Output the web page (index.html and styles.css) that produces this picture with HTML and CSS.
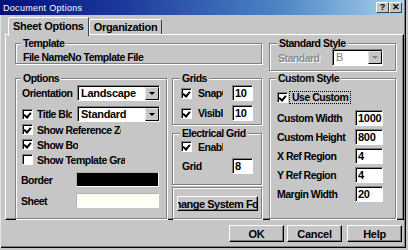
FILE: index.html
```html
<!DOCTYPE html>
<html lang="en">
<head>
  <meta charset="UTF-8">
  <title>Document Options</title>
  <link rel="stylesheet" href="styles.css">
</head>
<body>
  <div class="window">
    <div class="titlebar">
      <span class="title">Document Options</span>
      <div class="tb-buttons">
        <span class="tb-btn">?</span>
        <span class="tb-btn">&#x2715;</span>
      </div>
    </div>

    <div class="tabs">
      <div class="tab active">Sheet Options</div>
      <div class="tab">Organization</div>
    </div>

    <div class="panel">
      <fieldset class="group template">
        <legend>Template</legend>
        <div class="file-name">File NameNo Template File</div>
      </fieldset>

      <fieldset class="group standard">
        <legend>Standard Style</legend>
        <div class="std-row">
          <span class="disabled-text">Standard</span>
          <div class="combo combo-std disabled">
            <span class="combo-text">B</span>
            <span class="combo-btn"><span class="arrow"></span></span>
          </div>
        </div>
      </fieldset>

      <fieldset class="group options">
        <legend>Options</legend>
        <div class="opt-row first">
          <span class="opt-label">Orientation</span>
          <div class="combo combo-opt">
            <span class="combo-text">Landscape</span>
            <span class="combo-btn"><span class="arrow"></span></span>
          </div>
        </div>
        <div class="opt-row second">
          <span class="check checked"></span>
          <span class="check-text clip-title">Title Block</span>
          <div class="combo combo-opt">
            <span class="combo-text">Standard</span>
            <span class="combo-btn"><span class="arrow"></span></span>
          </div>
        </div>
        <div class="chk-row">
          <span class="check checked"></span>
          <span class="check-text clip-ref">Show Reference Zones</span>
        </div>
        <div class="chk-row">
          <span class="check checked"></span>
          <span class="check-text clip-border">Show Border</span>
        </div>
        <div class="chk-row">
          <span class="check"></span>
          <span class="check-text clip-tmpl">Show Template Graphics</span>
        </div>
        <div class="color-row border-row">
          <span class="color-label">Border</span>
          <span class="swatch swatch-black"></span>
        </div>
        <div class="color-row sheet-row">
          <span class="color-label">Sheet</span>
          <span class="swatch swatch-cream"></span>
        </div>
      </fieldset>

      <div class="mid">
        <fieldset class="group grids">
          <legend>Grids</legend>
          <div class="grid-row first">
            <span class="check checked"></span>
            <span class="check-text clip-grid">SnapOn</span>
            <span class="field field-small">10</span>
          </div>
          <div class="grid-row visib">
            <span class="check checked"></span>
            <span class="check-text clip-grid">Visible</span>
            <span class="field field-small">10</span>
          </div>
        </fieldset>

        <fieldset class="group electrical">
          <legend>Electrical Grid</legend>
          <div class="chk-row">
            <span class="check checked"></span>
            <span class="check-text clip-grid">Enable</span>
          </div>
          <div class="grid-row elec-grid">
            <span class="grid-label">Grid</span>
            <span class="field field-small">8</span>
          </div>
        </fieldset>

        <fieldset class="group font-group">
          <button class="win-btn font-btn"><span>Change System Font</span></button>
        </fieldset>
      </div>

      <fieldset class="group custom">
        <legend>Custom Style</legend>
        <div class="use-row">
          <span class="check checked"></span>
          <span class="focus-text">Use Custom</span>
        </div>
        <div class="cust-row">
          <span class="cust-label">Custom Width</span>
          <span class="field field-cust">1000</span>
        </div>
        <div class="cust-row">
          <span class="cust-label">Custom Height</span>
          <span class="field field-cust">800</span>
        </div>
        <div class="cust-row">
          <span class="cust-label">X Ref Region</span>
          <span class="field field-cust">4</span>
        </div>
        <div class="cust-row">
          <span class="cust-label">Y Ref Region</span>
          <span class="field field-cust">4</span>
        </div>
        <div class="cust-row">
          <span class="cust-label">Margin Width</span>
          <span class="field field-cust">20</span>
        </div>
      </fieldset>
    </div>

    <div class="actions">
      <button class="win-btn action-btn">OK</button>
      <button class="win-btn action-btn">Cancel</button>
      <button class="win-btn action-btn help">Help</button>
    </div>
  </div>
</body>
</html>
```

FILE: styles.css
```css
body, html {
  margin: 0;
  padding: 0;
  background: #c6c6c6;
  font-family: 'Liberation Sans', Arial, sans-serif;
  font-size: 10.5px;
  font-weight: bold;
  letter-spacing: -0.5px;
  color: #000;
  overflow: hidden;
}

.window {
  width: 406px;
  height: 248px;
  background: #c6c6c6;
  box-shadow: inset 1px 0 0 #e4e4e4, inset -1px -1px 0 #000, inset -2px -2px 0 #808080;
  display: flex;
  flex-direction: column;
}

/* title bar */
.titlebar {
  height: 15px;
  margin-right: 2px;
  display: flex;
  align-items: center;
  justify-content: space-between;
  background: linear-gradient(to right, #00107a, #1a3a9e 30%, #4f86c6 70%, #a8d4ee);
}

.title {
  color: #fff;
  font-size: 9px;
  font-weight: normal;
  letter-spacing: 0.3px;
  padding-left: 3px;
}

.tb-buttons {
  display: flex;
  padding-right: 2px;
}

.tb-btn {
  width: 11px;
  height: 9px;
  line-height: 9px;
  font-size: 9px;
  letter-spacing: 0;
  text-align: center;
  background: #c6c6c6;
  border: 1px solid;
  border-color: #fff #404040 #404040 #fff;
}

/* tabs */
.tabs {
  display: flex;
  align-items: flex-end;
  margin-top: 2px;
  padding-left: 8px;
  height: 17px;
  position: relative;
  z-index: 2;
}

.tab {
  height: 14px;
  line-height: 14px;
  padding: 0 4px;
  font-size: 11px;
  letter-spacing: -0.3px;
  border: 1px solid;
  border-bottom: none;
  border-color: #fff #404040 transparent #fff;
  border-radius: 2px 2px 0 0;
}

.tab.active {
  height: 18px;
  line-height: 16px;
  margin-bottom: -2px;
  background: #c6c6c6;
}

/* tab page */
.panel {
  margin: 0 2px 0 5px;
  height: 186px;
  box-sizing: border-box;
  border: 1px solid;
  border-color: #fff #000 #000 #fff;
  box-shadow: inset -1px -1px 0 #808080;
  padding: 2px 0 0 9px;
  display: grid;
  grid-template-columns: 152px 5px 90px 7px 127px;
  grid-template-rows: auto 1fr;
  row-gap: 1px;
}

.group {
  margin: 0;
  padding: 0 6px;
  min-width: 0;
  border: 1px solid #808080;
  box-shadow: 1px 1px 0 #fff, inset 1px 1px 0 #fff;
}

.group legend {
  padding: 0 2px;
  margin-left: -1px;
  line-height: 12px;
  white-space: nowrap;
  background: #c6c6c6;
}

.template {
  grid-column: 1 / 4;
  align-self: start;
}

.file-name {
  padding: 2px 0 0 1px;
  line-height: 12px;
  white-space: nowrap;
}

.standard {
  grid-column: 5;
  align-self: start;
  padding: 0 12px 4px 8px;
}

.std-row {
  display: flex;
  align-items: center;
  justify-content: space-between;
}

.disabled-text {
  color: #8a8a8a;
  text-shadow: 1px 1px 0 #fff;
}

/* combo boxes */
.combo {
  height: 16px;
  box-sizing: border-box;
  display: flex;
  background: #fff;
  border: 1px solid;
  border-color: #808080 #fff #fff #808080;
  box-shadow: inset 1px 1px 0 #000;
}

.combo-text {
  flex: 1;
  padding: 1px 0 0 3px;
  line-height: 13px;
  font-size: 11px;
  letter-spacing: -0.3px;
  white-space: nowrap;
  overflow: hidden;
}

.combo-btn {
  width: 14px;
  height: 13px;
  margin-top: 1px;
  box-sizing: border-box;
  background: #c6c6c6;
  border: 1px solid;
  border-color: #e4e4e4 #000 #000 #e4e4e4;
  display: flex;
  align-items: center;
  justify-content: center;
}

.arrow {
  width: 0;
  height: 0;
  border-left: 3px solid transparent;
  border-right: 3px solid transparent;
  border-top: 3px solid #000;
}

.combo-std {
  width: 51px;
  height: 17px;
}

.disabled .combo-text {
  color: #808080;
  font-weight: normal;
}

.disabled .arrow {
  border-top-color: #808080;
}

.combo-opt {
  width: 83px;
  margin-left: auto;
}

/* options */
.options {
  grid-column: 1;
}

.opt-row {
  display: flex;
  align-items: center;
  height: 16px;
}

.opt-row.first {
  margin-top: 1px;
}

.opt-row.second {
  margin-top: 5px;
}

.opt-label {
  width: 55px;
  overflow: hidden;
  white-space: nowrap;
}

.chk-row {
  display: flex;
  align-items: center;
  height: 15px;
}

.check {
  width: 11px;
  height: 11px;
  box-sizing: border-box;
  flex-shrink: 0;
  background: #fff;
  border: 1px solid;
  border-color: #808080 #fff #fff #808080;
  box-shadow: inset 1px 1px 0 #000;
  position: relative;
}

.check.checked::after {
  content: "";
  position: absolute;
  left: 2px;
  top: 1px;
  width: 3px;
  height: 5px;
  border: solid #000;
  border-width: 0 2px 2px 0;
  transform: rotate(40deg);
}

.check-text {
  margin-left: 4px;
  flex-shrink: 0;
  overflow: hidden;
  white-space: nowrap;
}

.clip-title { width: 35px; }
.clip-ref { width: 84px; }
.clip-border { width: 41px; }
.clip-tmpl { width: 88px; }
.clip-grid { width: 25px; margin-left: 6px; }

.color-row {
  display: flex;
  align-items: center;
  height: 15px;
}

.border-row {
  margin-top: 5px;
}

.sheet-row {
  margin-top: 6px;
}

.color-label {
  width: 55px;
  margin-left: -1px;
}

.swatch {
  width: 83px;
  height: 15px;
  box-sizing: border-box;
  border: 1px solid;
  border-color: #b0b0b0 #fff #fff #b0b0b0;
}

.swatch-black {
  background: #000;
}

.swatch-cream {
  background: #fffef2;
}

/* middle column */
.mid {
  grid-column: 3;
  display: flex;
  flex-direction: column;
}

.grids {
  padding: 0 8px 3px 8px;
}

.grid-row {
  display: flex;
  align-items: center;
  height: 16px;
}

.grid-row.first {
  margin-top: 1px;
}

.grid-row.visib {
  margin-top: 4px;
}

.field {
  height: 16px;
  box-sizing: border-box;
  background: #fff;
  border: 1px solid;
  border-color: #808080 #fff #fff #808080;
  box-shadow: inset 1px 1px 0 #000;
  padding: 1px 0 0 2px;
  line-height: 13px;
  font-size: 11px;
  letter-spacing: -0.3px;
  white-space: nowrap;
  overflow: hidden;
}

.field-small {
  width: 21px;
  margin-left: auto;
}

.electrical {
  margin-top: 2px;
  padding: 0 8px 10px 8px;
}

.elec-grid {
  margin-top: 4px;
}

.grid-label {
  padding-left: 1px;
}

.font-group {
  margin-top: 2px;
  flex: 1;
  padding: 8px 3px 0 4px;
}

/* buttons */
.win-btn {
  font-family: inherit;
  font-size: 11px;
  font-weight: bold;
  letter-spacing: -0.3px;
  color: #000;
  background: #c6c6c6;
  border: 1px solid;
  border-color: #fff #000 #000 #fff;
  box-shadow: inset -1px -1px 0 #808080;
  padding: 0;
  margin: 0;
}

.font-btn {
  width: 81px;
  height: 15px;
  display: flex;
  justify-content: center;
  align-items: center;
  overflow: hidden;
  white-space: nowrap;
  letter-spacing: -0.5px;
}

.font-btn span {
  flex-shrink: 0;
}

/* custom style */
.custom {
  grid-column: 5;
  padding: 0 12px 0 7px;
}

.use-row {
  display: flex;
  align-items: center;
  height: 13px;
  margin-top: 7px;
}

.focus-text {
  margin-left: 1px;
  padding: 0 2px;
  line-height: 11px;
  border: 1px dotted #000;
}

.cust-row {
  display: flex;
  align-items: center;
  height: 16px;
  margin-top: 3px;
}

.use-row + .cust-row {
  margin-top: 6px;
}

.cust-label {
  width: 78px;
  white-space: nowrap;
}

.field-cust {
  width: 28px;
}

/* dialog buttons */
.actions {
  display: flex;
  justify-content: flex-end;
  gap: 3px;
  margin-top: 5px;
  padding-right: 4px;
}

.action-btn {
  width: 55px;
  height: 17px;
}

.action-btn.help {
  margin-left: 2px;
}
```
